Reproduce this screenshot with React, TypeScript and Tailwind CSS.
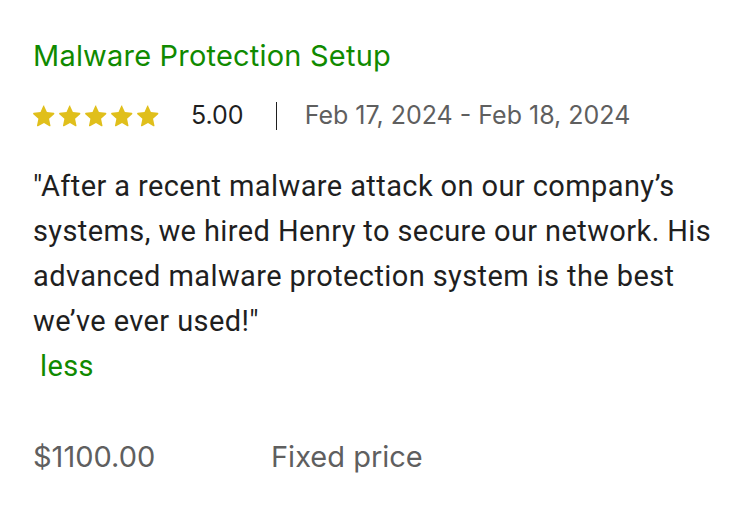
import React from 'react';

const Star: React.FC = () => (
  <svg width="22" height="22" viewBox="1.8 2 20.4 20" fill="#e0bf1b">
    <path d="M12 2.6l2.7 5.8 6.3.7c.6.1.8.8.4 1.2l-4.7 4.3 1.3 6.2c.1.6-.5 1-1 .7L12 18.4l-5.5 3.1c-.5.3-1.1-.1-1-.7l1.3-6.2-4.7-4.3c-.4-.4-.2-1.1.4-1.2l6.3-.7L11.3 2.6c.2-.5 1-.5 1.2 0z" />
  </svg>
);

const ReviewCard: React.FC = () => (
  <div className="pl-[33px] pr-[26px] pt-[38px] font-['Inter',sans-serif]">
    <h2 className="text-[29px] leading-[36px] text-[#108a00] tracking-[0.2px]">Malware Protection Setup</h2>

    <div className="mt-[27px] flex items-center h-[30px] text-[25px]">
      <div className="flex gap-[4px]">
        {[0, 1, 2, 3, 4].map((i) => (
          <Star key={i} />
        ))}
      </div>
      <span className="ml-[32px] text-[#1f1f1f]">5.00</span>
      <span className="ml-[32px] w-px h-[28px] bg-[#1f1f1f]" />
      <span className="ml-[28px] text-[#5f5f5f]">Feb 17, 2024 - Feb 18, 2024</span>
    </div>

    <p className="mt-[33px] font-['Roboto',sans-serif] text-[29px] leading-[45px] text-[#1f1f1f] tracking-[0.4px]">
      "After a recent malware attack on our company’s systems, we hired Henry to secure our network. His advanced
      malware protection system is the best we’ve ever used!"
      <br />
      <button className="ml-[7px] text-[#108a00] tracking-[0.4px]">less</button>
    </p>

    <div className="mt-[50px] flex text-[29px] leading-[36px] text-[#5f5f5f]">
      <span className="w-[238px]">$1100.00</span>
      <span>Fixed price</span>
    </div>
  </div>
);

export default function App() {
  return (
    <div className="w-[749px] h-[517px] bg-white">
      <ReviewCard />
    </div>
  );
}
